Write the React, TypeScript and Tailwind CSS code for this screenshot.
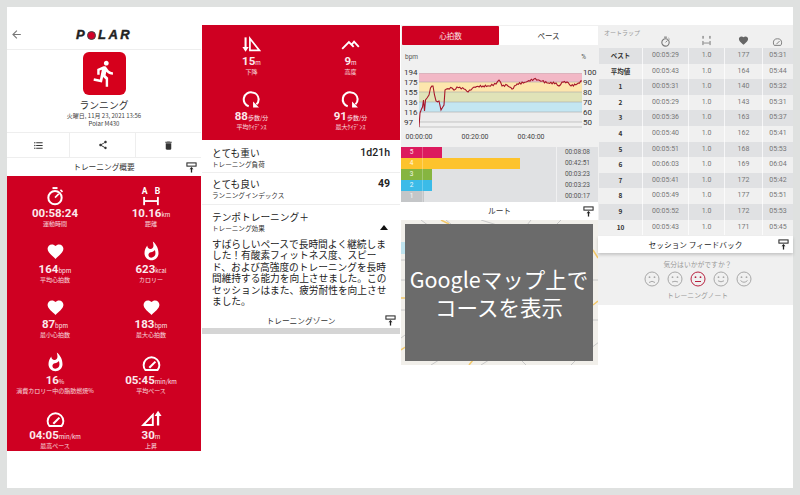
import { MdArrowBack, MdDelete, MdDirectionsRun, MdFavorite, MdFormatListBulleted, MdShare, MdWhatshot } from 'react-icons/md';
import type { ReactNode } from 'react';

const jp = "font-['Noto_Sans_CJK_JP','Noto_Sans',sans-serif]";

function Roller() {
	return (
		<svg viewBox="0 0 12 12" className="size-[11px] text-[#222]" fill="none" stroke="currentColor">
			<rect x="1" y="1" width="10" height="3.5" strokeWidth="1.1" />
			<path d="M6 6v5.5" strokeWidth="1.4" />
			<path d="M3.8 8 6 5.6 8.2 8z" fill="currentColor" stroke="none" />
		</svg>
	);
}

function SectionHeader({ title, className }: { title: string; className?: string }) {
	return (
		<div className={`flex items-center bg-white ${className ?? ''}`}>
			<div className="w-4" />
			<div className={`flex-1 text-center text-[7.7px] text-[#333] ${jp}`}>{title}</div>
			<div className="flex w-4 justify-center pr-1"><Roller /></div>
		</div>
	);
}

function Stopwatch({ className, color = 'white' }: { className: string; color?: string }) {
	return (
		<svg viewBox="0 0 24 24" className={className} fill="none" stroke={color} strokeWidth="2.4">
			<circle cx="12" cy="14" r="8" />
			<path d="M9 2.5h6" />
			<path d="M12 14 16.5 9.5" strokeWidth="2" />
			<path d="M18.5 4.5 21 7" strokeWidth="2" />
		</svg>
	);
}

function AB() {
	return (
		<svg viewBox="0 0 24 24" className="size-[22px]" fill="white">
			<text x="2" y="10" fontSize="9.5" fontWeight="700" fontFamily="Roboto">A</text>
			<text x="16" y="10" fontSize="9.5" fontWeight="700" fontFamily="Roboto">B</text>
			<rect x="3.5" y="13" width="2" height="9" />
			<rect x="18.5" y="13" width="2" height="9" />
			<rect x="5" y="16.5" width="14" height="2" />
		</svg>
	);
}

function Gauge() {
	return (
		<svg viewBox="0 0 24 24" className="size-[21px]" fill="none" stroke="white" strokeWidth="2.2">
			<path d="M5 20.5h14a8.5 8.5 0 0 0 2-5.5 9 9 0 0 0-18 0c0 2 .7 4 2 5.5z" />
			<path d="M9.5 18 16.5 11" strokeWidth="2.4" />
		</svg>
	);
}

function Ascent() {
	return (
		<svg viewBox="0 0 24 24" className="size-[21px]" fill="none" stroke="white" strokeWidth="2.2">
			<path d="M2.5 19.5h11V8z" />
			<path d="M19.5 20V7" strokeWidth="2.6" />
			<path d="M15.5 9 19.5 3l4 6z" fill="white" stroke="none" />
		</svg>
	);
}

function Descent() {
	return (
		<svg viewBox="0 0 24 24" className="size-[19px]" fill="none" stroke="white" strokeWidth="2.2">
			<path d="M10 4.5v15h12z" />
			<path d="M4.5 3v13" strokeWidth="2.6" />
			<path d="M.5 15l4 6 4-6z" fill="white" stroke="none" />
		</svg>
	);
}

function Peaks() {
	return (
		<svg viewBox="0 0 24 24" className="size-[19px]" fill="none" stroke="white" strokeWidth="2.4">
			<path d="M1.5 17.5 10 9l6 6M14 11.5l2.5-3 6 6.5" />
		</svg>
	);
}

function Cadence() {
	return (
		<svg viewBox="0 0 24 24" className="size-[19px]" fill="none" stroke="white" strokeWidth="2.6">
			<path d="M8.5 20.5A9 9 0 0 1 13 3.1a9 9 0 0 1 8 8.4c.1 2.6-1 5-2.8 6.6" />
			<path d="M21.5 22h-7.5v-7.5z" fill="white" stroke="none" />
		</svg>
	);
}

function Stat({ icon, value, unit, label }: { icon: ReactNode; value: string; unit: string; label: string }) {
	return (
		<div className="flex flex-col items-center text-white">
			<div className="flex h-[22px] items-center justify-center">{icon}</div>
			<div className="flex h-[12px] items-baseline font-['Roboto',sans-serif] text-[11.5px] leading-[12px] font-bold text-[#fbe9ec]">
				{value}
				<span className={`text-[6px] font-normal ${jp}`}>{unit}</span>
			</div>
			<div className={`h-[10px] text-[6px] leading-[10px] whitespace-nowrap text-white/85 ${jp}`}>{label}</div>
		</div>
	);
}

const heart = <MdFavorite size={19} />;
const flame = <MdWhatshot size={21} />;
const cadence = <Cadence />;

const summary = [
	{ icon: <Stopwatch className="size-[20px]" />, value: '00:58:24', unit: '', label: '運動時間' },
	{ icon: <AB />, value: '10.16', unit: 'km', label: '距離' },
	{ icon: heart, value: '164', unit: 'bpm', label: '平均心拍数' },
	{ icon: flame, value: '623', unit: 'kcal', label: 'カロリー' },
	{ icon: heart, value: '87', unit: ' bpm', label: '最小心拍数' },
	{ icon: heart, value: '183', unit: 'bpm', label: '最大心拍数' },
	{ icon: flame, value: '16', unit: '%', label: '消費カロリー中の脂肪燃焼%' },
	{ icon: <Gauge />, value: '05:45', unit: 'min/km', label: '平均ペース' },
	{ icon: <Gauge />, value: '04:05', unit: 'min/km', label: '最高ペース' },
	{ icon: <Ascent />, value: '30', unit: 'm', label: '上昇' },
];

const zones = [
	{ n: '5', bar: 'bg-[#dc1a5e]', w: 'w-[41px]', time: '00:08:08' },
	{ n: '4', bar: 'bg-[#fdc32d]', w: 'w-[119px]', time: '00:42:51' },
	{ n: '3', bar: 'bg-[#86b540]', w: 'w-[31px]', time: '00:03:23' },
	{ n: '2', bar: 'bg-[#3bbbe8]', w: 'w-[31px]', time: '00:03:23' },
	{ n: '1', bar: 'bg-[#c4c6c8]', w: 'w-[23px]', time: '00:00:17' },
];

const laps = [
	['ベスト', '00:05:29', '1.0', '177', '05:31'],
	['平均値', '00:05:43', '1.0', '164', '05:44'],
	['1', '00:05:31', '1.0', '140', '05:32'],
	['2', '00:05:29', '1.0', '143', '05:31'],
	['3', '00:05:36', '1.0', '163', '05:37'],
	['4', '00:05:40', '1.0', '162', '05:41'],
	['5', '00:05:51', '1.0', '168', '05:53'],
	['6', '00:06:03', '1.0', '169', '06:04'],
	['7', '00:05:41', '1.0', '172', '05:42'],
	['8', '00:05:49', '1.0', '177', '05:51'],
	['9', '00:05:52', '1.0', '172', '05:53'],
	['10', '00:05:43', '1.0', '171', '05:45'],
];

const hrPoints = [
	[0, 54], [1, 40], [3.5, 34], [4.5, 27], [5.5, 38], [6.5, 27], [8, 25], [10, 22], [11.5, 15], [14, 13], [15.5, 22], [17, 28],
	[20, 28], [22, 37], [25, 32], [26, 17], [27.5, 16], [33, 15], [35, 17], [38, 14], [45, 16], [49, 19], [52, 17], [55, 14],
	[64, 13], [70, 13], [77, 11], [80, 7], [83, 13], [88, 12], [93, 16], [98, 11], [107, 9], [115, 6], [123, 8], [128, 10],
	[137, 10], [140, 13], [143, 9], [148, 9], [152, 13], [158, 11], [163, 8],
];

// fine jitter between the main points, the trace is noisy in the picture
function hrTrace() {
	const out: string[] = [];
	hrPoints.forEach(([x, y], i) => {
		out.push(`${x},${y}`);
		const next = hrPoints[i + 1];
		if (!next) return;
		const steps = Math.floor((next[0] - x) / 1.2);
		for (let s = 1; s < steps; s++) {
			const t = s / steps;
			const j = Math.sin(s * 2.7 + i) * 0.9;
			out.push(`${(x + (next[0] - x) * t).toFixed(1)},${(y + (next[1] - y) * t + j).toFixed(1)}`);
		}
	});
	return out.join(' ');
}

function Face({ mouth, red }: { mouth: string; red?: boolean }) {
	return (
		<svg viewBox="0 0 16 16" className={`size-[16px] ${red ? 'text-[#b8213f]' : 'text-[#a8a8a8]'}`} fill="none" stroke="currentColor" strokeWidth="1">
			<circle cx="8" cy="8" r="7" />
			<circle cx="5.5" cy="6.2" r="0.9" fill="currentColor" stroke="none" />
			<circle cx="10.5" cy="6.2" r="0.9" fill="currentColor" stroke="none" />
			<path d={mouth} />
		</svg>
	);
}

export default function App() {
	return (
		<div className={`h-[495px] w-[800px] overflow-hidden bg-[#dfe1e0] p-[7px] ${jp}`}>
			<div className="flex h-[481px] w-[786px] bg-white">
				{/* summary */}
				<div className="w-[195px] pr-px">
					<div className="grid h-[43px] grid-cols-[1fr_auto_1fr] items-end border-b border-[#eee] pb-[7px]">
						<MdArrowBack size={13} className="mb-px ml-[3px] text-[#777]" />
						<div className="flex h-[14px] items-center font-['Liberation_Sans',sans-serif] text-[13px] font-bold tracking-[2.4px] text-[#222] italic [-webkit-text-stroke:0.4px_#222]">
							P<span className="mr-[2px] inline-block size-[9px] rounded-full border border-[#444] bg-[#d10027]" />LAR
						</div>
						<div />
					</div>
					<div className="mx-auto mt-0.5 flex size-[43px] items-center justify-center rounded-md bg-[#d6001c] text-white">
						<MdDirectionsRun size={29} />
					</div>
					<div className="mt-1 text-center text-[9.8px] leading-[13px] text-[#333]">ランニング</div>
					<div className="text-center text-[6px] leading-[8px] text-[#444]">火曜日, 11月 23, 2021 13:56</div>
					<div className="text-center text-[6px] leading-[8px] text-[#444]">Polar M430</div>
					<div className="mt-1 flex h-[26px] border-y border-[#eee] text-[#333]">
						<div className="flex w-[63px] items-center justify-center border-r border-[#eee]"><MdFormatListBulleted size={11} /></div>
						<div className="flex w-[66px] items-center justify-center border-r border-[#eee]"><MdShare size={10} /></div>
						<div className="flex flex-1 items-center justify-center"><MdDelete size={11} /></div>
					</div>
					<SectionHeader title="トレーニング概要" className="h-[18px]" />
					<div className="grid h-[275px] grid-cols-2 content-start gap-y-[11.5px] overflow-hidden bg-[#cf0022] pt-[9px] pr-[2px]">
						{summary.map((s) => <Stat key={s.label} {...s} />)}
					</div>
				</div>

				{/* load + zones */}
				<div className="w-[198px] pt-[18px]">
					<div className="grid h-[115px] grid-cols-2 content-start gap-y-[11px] bg-[#cf0022] pt-2">
						<Stat icon={<Descent />} value="15" unit="m" label="下降" />
						<Stat icon={<Peaks />} value="9" unit="m" label="高度" />
						<Stat icon={cadence} value="88" unit="歩数/分" label="平均ｹｲﾃﾞﾝｽ" />
						<Stat icon={cadence} value="91" unit="歩数/分" label="最大ｹｲﾃﾞﾝｽ" />
					</div>
					<div className="flex h-[33px] justify-between border-b border-[#eee] pt-1.5 pr-2.5 pl-2.5">
						<div>
							<div className="text-[9.7px] leading-[14px] text-[#222]">とても重い</div>
							<div className="text-[6.6px] leading-[8px] text-[#333]">トレーニング負荷</div>
						</div>
						<div className="font-['Roboto',sans-serif] text-[10.5px] leading-[14px] font-medium text-[#222]">1d21h</div>
					</div>
					<div className="flex h-[32px] justify-between border-b border-[#eee] pt-1 pr-2.5 pl-2.5">
						<div>
							<div className="text-[9.7px] leading-[14px] text-[#222]">とても良い</div>
							<div className="text-[6.6px] leading-[8px] text-[#333]">ランニングインデックス</div>
						</div>
						<div className="font-['Roboto',sans-serif] text-[10.5px] leading-[14px] font-bold text-[#222]">49</div>
					</div>
					<div className="h-[108px] pt-[5px] pr-2.5 pl-2.5">
						<div className="flex items-center justify-between">
							<div>
								<div className="text-[9.7px] leading-[14px] text-[#222]">テンポトレーニング＋</div>
								<div className="text-[6.6px] leading-[8px] text-[#333]">トレーニング効果</div>
							</div>
							<div className="mt-3 mr-0.5 border-x-[4px] border-b-[5px] border-x-transparent border-b-[#111]" />
						</div>
						<p className="mt-[7px] text-[9.7px] leading-[11.4px] text-[#222]">
							すばらしいペースで長時間よく継続しました！有酸素フィットネス度、スピード、および高強度のトレーニングを長時間維持する能力を向上させました。このセッションはまた、疲労耐性を向上させました。
						</p>
					</div>
					<SectionHeader title="トレーニングゾーン" className="h-[15px]" />
					<div className="h-[6px] bg-[#d5d5d5]" />
				</div>

				{/* chart + map */}
				<div className="ml-px w-[197px] pt-[18px]">
					<div className="h-[122px] bg-[#f0f0f0] pt-px">
						<div className="ml-px flex h-[19px]">
							<div className="flex w-[97px] items-center justify-center rounded-[1px] bg-[#cf0022] text-[7.5px] text-white/90">心拍数</div>
							<div className="flex flex-1 items-center justify-center bg-white text-[7.5px] text-[#333]">ペース</div>
						</div>
						<div className="flex h-[23px] items-center justify-between px-1 pt-[3px] font-['Roboto',sans-serif] text-[6.5px] text-[#555]">
							<span>bpm</span>
							<span className="mr-2">%</span>
						</div>
						<div className="flex h-[60px] font-['Roboto',sans-serif] text-[8px] leading-[10px] text-[#333]">
							<div className="w-[18px] pl-[3px]">
								{['194', '175', '155', '136', '116', '97'].map((n) => <div key={n} className="h-[10px]">{n}</div>)}
							</div>
							<svg viewBox="0 0 163 55" className="mt-[5px] h-[55px] w-[163px]">
								<rect width="163" height="9" y="0" fill="#f2b8c6" />
								<rect width="163" height="10" y="9" fill="#fde6ad" />
								<rect width="163" height="10" y="19" fill="#e0e3b8" />
								<rect width="163" height="10" y="29" fill="#c3e6f2" />
								<rect width="163" height="10" y="39" fill="#ececec" />
								<path d="M0 0h163M0 9h163M0 19h163M0 29h163M0 39h163M0 49h163M0 54h163" stroke="#aaa" strokeWidth="0.6" />
								<polyline points={hrTrace()} fill="none" stroke="#a8172b" strokeWidth="1.1" />
							</svg>
							<div className="pl-px">
								{['100', '90', '80', '70', '60', '50'].map((n) => <div key={n} className="h-[10px]">{n}</div>)}
							</div>
						</div>
						<div className="ml-1 flex h-[14px] items-end gap-7 font-['Roboto',sans-serif] text-[7px] leading-[9px] text-[#444]">
							<span className="w-7 text-center">00:00:00</span>
							<span className="w-7 text-center">00:20:00</span>
							<span className="w-7 text-center">00:40:00</span>
						</div>
					</div>
					<div>
						{zones.map((z) => (
							<div key={z.n} className="flex h-[11px] bg-[#e0e1e3] font-['Roboto',sans-serif] text-[6.5px] leading-[11px]">
								<div className="w-[155px]">
									<div className={`h-full ${z.bar} ${z.w}`}>
										<div className="h-full w-[22px] border-r border-white/25 text-center text-white/90">{z.n}</div>
									</div>
								</div>
								<div className="flex-1 border-l border-white/50 text-center text-[#555]">{z.time}</div>
							</div>
						))}
					</div>
					<SectionHeader title="ルート" className="h-[18px]" />
					<div className="relative h-[145px] bg-[#f1efea] pt-1 pr-[5px] pb-1 pl-1">
						<svg viewBox="0 0 197 145" className="absolute inset-0 size-full" fill="none">
							<path d="M0 40h8M0 60h6M0 90h5M0 118 8 112M20 0l8 6M45 0l6 5M80 0l16 5M130 0l-4 5M160 0l-5 5M190 60h8M192 100h6M190 128l8-6M30 145l8-5M80 145l8-5M125 145l-5-5M170 145l6-6" stroke="#c8c8c8" />
							<path d="M0 78h6M0 130l6-4M192 30l5 8M192 85l5-4M40 0l8 4M68 145l4-5" stroke="#f2c86a" strokeWidth="1.5" />
							<path d="M0 22h5v12H0z" fill="#bfe3ee" />
						</svg>
						<div className="relative flex h-full flex-col items-center justify-center bg-[#6b6b6b] text-[21.5px] leading-[28px] text-white">
							<div>Googleマップ上で</div>
							<div>コースを表示</div>
						</div>
					</div>
				</div>

				{/* laps + feedback */}
				<div className="w-[195px] pt-[18px]">
					<div className="h-[211px] bg-[#f0f0f0]">
						<div className="ml-px grid h-[23px] grid-cols-[43px_46px_36px_38px_31px]">
							<div className="pt-[3px] pl-[5px] text-[6px] leading-[9px] whitespace-nowrap text-[#999]">オートラップ</div>
							<div className="flex items-end justify-center pb-[1px]"><Stopwatch className="size-[11px]" color="#777" /></div>
							<div className="flex items-end justify-center pb-[2px]">
								<svg viewBox="0 0 24 24" className="size-[11px]" fill="#888">
									<rect x="3" y="2" width="3" height="6" /><rect x="18" y="2" width="3" height="6" />
									<rect x="3" y="13" width="2.5" height="9" /><rect x="18.5" y="13" width="2.5" height="9" /><rect x="5" y="16.5" width="14" height="2" />
								</svg>
							</div>
							<div className="flex items-end justify-center pb-[2px] text-[#666]"><MdFavorite size={11} /></div>
							<div className="flex items-end justify-center pb-[1px]">
								<svg viewBox="0 0 24 24" className="size-[11px]" fill="none" stroke="#777" strokeWidth="2">
									<path d="M5 20.5h14a8.5 8.5 0 0 0 2-5.5 9 9 0 0 0-18 0c0 2 .7 4 2 5.5z" /><path d="M9.5 18 16.5 11" />
								</svg>
							</div>
						</div>
						{laps.map((row, i) => (
							<div key={row[0]} className={`ml-px grid h-[15.6px] grid-cols-[43px_46px_36px_38px_31px] text-center font-['Roboto',sans-serif] text-[7px] leading-[15.6px] text-[#777] ${i % 2 === 0 ? 'bg-[#e0e1e3]' : 'bg-[#f0f0f0]'}`}>
								<div className={`text-[6.5px] font-bold text-[#333] ${jp}`}>{row[0]}</div>
								<div className="border-l border-white/70">{row[1]}</div>
								<div className="border-l border-white/70">{row[2]}</div>
								<div className="border-l border-white/70">{row[3]}</div>
								<div className="border-l border-white/70">{row[4]}</div>
							</div>
						))}
					</div>
					<div className="relative flex h-[17px] items-center bg-white shadow-[0_2px_3px_rgba(0,0,0,0.18)]">
						<div className="w-4" />
						<div className="flex-1 text-center text-[7.7px] text-[#222]">セッション フィードバック</div>
						<div className="flex w-4 justify-center pr-1"><Roller /></div>
					</div>
					<div className="flex h-[52px] flex-col items-center bg-[#f0f0f0] pt-[6px] pl-1">
						<div className="text-[6.8px] leading-[10px] text-[#999]">気分はいかがですか？</div>
						<div className="mt-[2px] flex gap-[7px]">
							<Face mouth="M5 11.5q3-2.5 6 0" />
							<Face mouth="M5 11q3-1.5 6 0" />
							<Face mouth="M5 10.5h6" red />
							<Face mouth="M5 9.8q3 2 6 0" />
							<Face mouth="M4.5 9.5q3.5 3.5 7 0" />
						</div>
						<div className="mt-[3px] text-[6.8px] leading-[10px] text-[#999]">トレーニングノート</div>
					</div>
				</div>
			</div>
		</div>
	);
}
